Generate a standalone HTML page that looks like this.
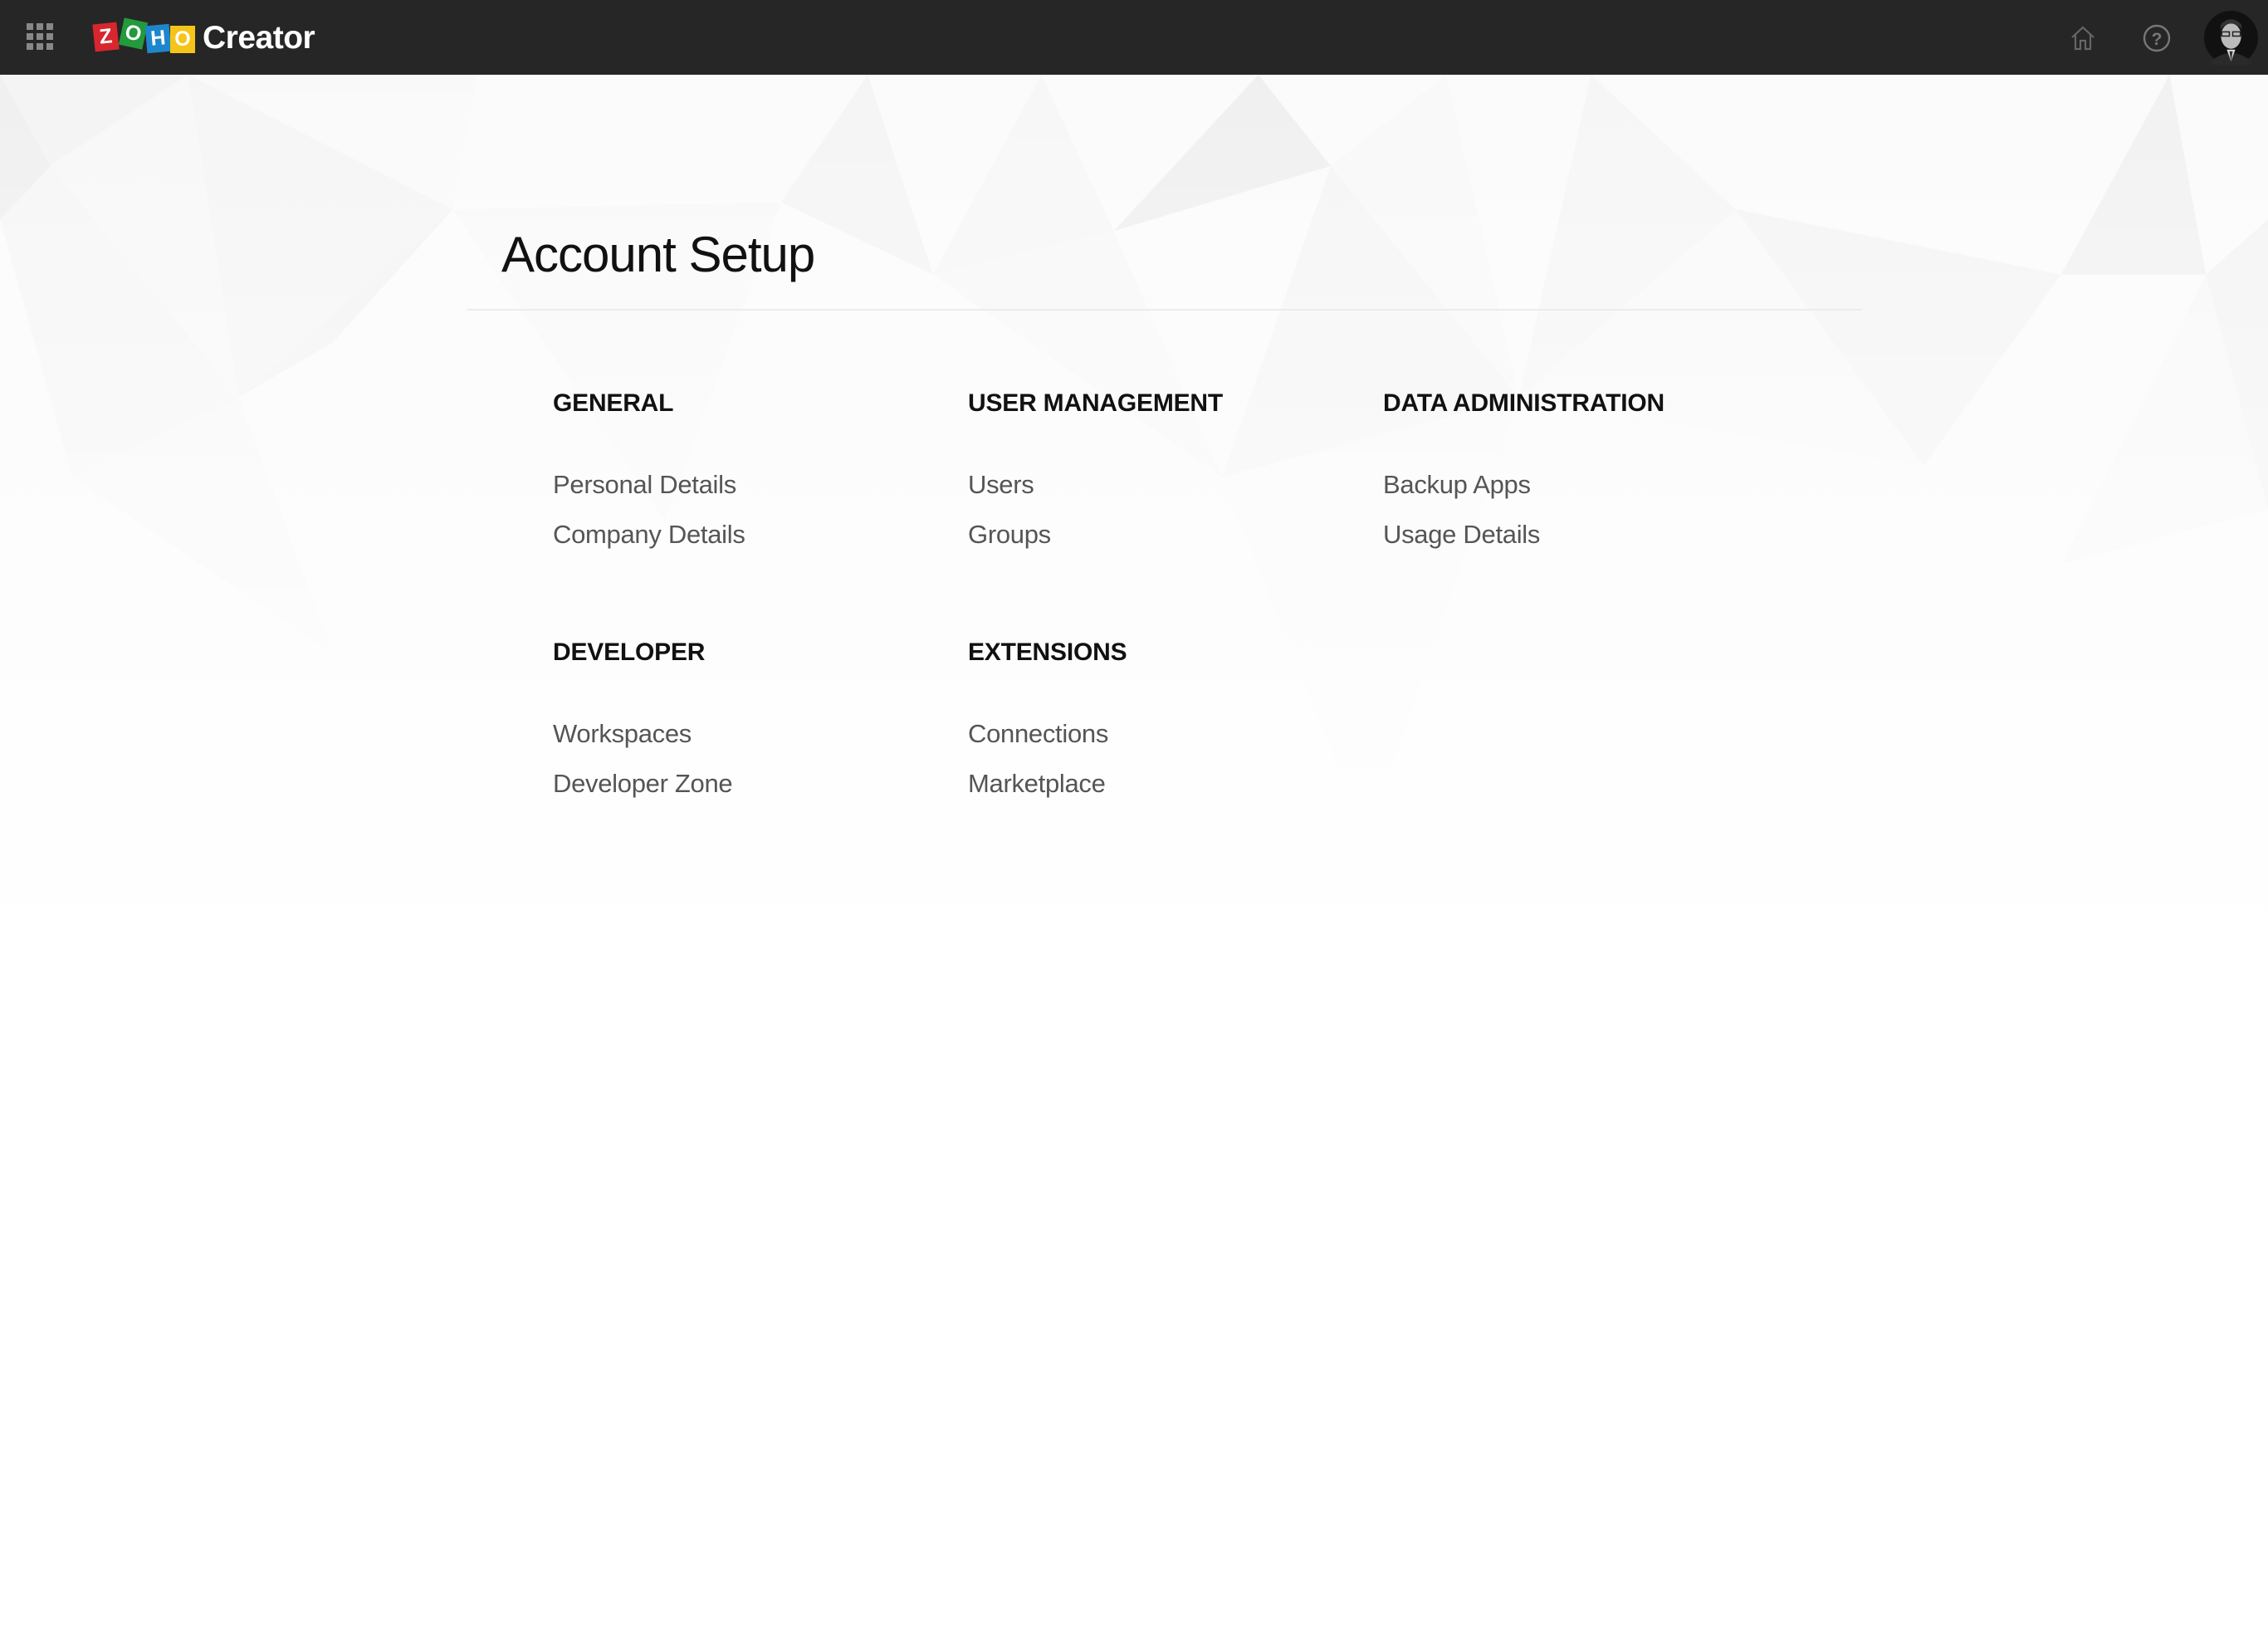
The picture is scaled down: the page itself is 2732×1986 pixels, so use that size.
<!DOCTYPE html>
<html><head><meta charset="utf-8"><style>
html,body{margin:0;padding:0;}
body{width:2732px;height:1986px;position:relative;background:#fff;font-family:"Liberation Sans",sans-serif;overflow:hidden;}
#bg{position:absolute;left:0;top:90px;}
.hdr{position:absolute;left:0;top:0;width:2732px;height:90px;background:#262626;}
.t{position:absolute;white-space:nowrap;}
.h{font-weight:bold;font-size:30px;color:#111;letter-spacing:-0.2px;}
.l{font-size:31px;color:#555;letter-spacing:-0.3px;}
.box{position:absolute;width:29px;height:33px;color:#fff;font-weight:bold;font-size:25px;text-align:center;line-height:33px;}
</style></head><body>
<svg id="bg" width="2732" height="1100" viewBox="0 0 1568 631" preserveAspectRatio="none">
<defs><linearGradient id="f" x1="0" y1="0" x2="0" y2="1"><stop offset="0" stop-color="#fff" stop-opacity="0.2"/><stop offset="0.55" stop-color="#fff" stop-opacity="0.6"/><stop offset="1" stop-color="#fff" stop-opacity="1"/></linearGradient></defs>
<rect width="1568" height="631" fill="#fafafa"/>
<g stroke="none">
<polygon points="0,0 130,0 35,63" fill="#f1f1f1"/>
<polygon points="0,0 35,63 0,100" fill="#ececec"/>
<polygon points="35,63 165,223 130,0" fill="#f6f6f6"/>
<polygon points="130,0 313,93 165,223" fill="#f3f3f3"/>
<polygon points="130,0 313,93 330,0" fill="#f8f8f8"/>
<polygon points="0,100 35,63 165,223 50,278" fill="#f4f4f4"/>
<polygon points="313,93 540,88 460,308" fill="#f7f7f7"/>
<polygon points="540,88 645,138 600,0" fill="#f2f2f2"/>
<polygon points="645,138 770,108 720,0" fill="#f5f5f5"/>
<polygon points="770,108 920,63 870,0" fill="#ececec"/>
<polygon points="770,108 845,278 645,138" fill="#f6f6f6"/>
<polygon points="920,63 1050,223 845,278" fill="#f3f3f3"/>
<polygon points="920,63 1050,223 1000,0" fill="#f7f7f7"/>
<polygon points="1050,223 1200,93 1100,0" fill="#f4f4f4"/>
<polygon points="1200,93 1330,270 1050,223" fill="#f7f7f7"/>
<polygon points="1200,93 1425,138 1330,270" fill="#f2f2f2"/>
<polygon points="1425,138 1525,138 1500,0" fill="#eeeeee"/>
<polygon points="1525,138 1568,100 1568,300" fill="#f1f1f1"/>
<polygon points="1425,338 1525,138 1568,300" fill="#f6f6f6"/>
<polygon points="165,223 230,185 313,93" fill="#f1f1f1"/>
<polygon points="50,278 165,223 230,400" fill="#f6f6f6"/>
<polygon points="845,278 945,528 1050,223" fill="#f8f8f8"/>
</g>
<rect width="1568" height="631" fill="url(#f)"/>
</svg>
<div class="hdr"></div>
<svg style="position:absolute;left:32px;top:28px" width="32" height="32"><g fill="#888"><rect x="0" y="0" width="8" height="8"/><rect x="12" y="0" width="8" height="8"/><rect x="24" y="0" width="8" height="8"/><rect x="0" y="12" width="8" height="8"/><rect x="12" y="12" width="8" height="8"/><rect x="24" y="12" width="8" height="8"/><rect x="0" y="24" width="8" height="8"/><rect x="12" y="24" width="8" height="8"/><rect x="24" y="24" width="8" height="8"/></g></svg>
<div class="box" style="left:113px;top:28px;background:#d8262f;transform:rotate(-6deg)">Z</div>
<div class="box" style="left:146px;top:24px;background:#239a3c;transform:rotate(12deg)">O</div>
<div class="box" style="left:176px;top:30px;background:#1e86cc;transform:rotate(-5deg)">H</div>
<div class="box" style="left:205px;top:31px;width:30px;background:#f5c418;">O</div>
<div class="t" style="left:244px;top:24px;font-size:39px;font-weight:bold;color:#fff;letter-spacing:-0.5px">Creator</div>
<svg style="position:absolute;left:2493px;top:30px" width="32" height="32" viewBox="0 0 32 32"><path d="M3 15 L16 3 L29 15 M7 12 V29 H13 V19 H19 V29 H25 V12" fill="none" stroke="#666" stroke-width="2.2"/></svg>
<svg style="position:absolute;left:2580px;top:28px" width="36" height="36" viewBox="0 0 36 36"><circle cx="18" cy="18" r="15" fill="none" stroke="#777" stroke-width="2.4"/><text x="18" y="26" text-anchor="middle" font-family="Liberation Sans" font-weight="bold" font-size="21" fill="#777">?</text></svg>
<svg style="position:absolute;left:2655px;top:13px" width="65" height="65" viewBox="0 0 64 64"><circle cx="32" cy="32" r="32" fill="#111"/><ellipse cx="32" cy="30" rx="12" ry="15" fill="#bbb"/><path d="M19 22 Q32 8 45 22 L44 16 Q32 4 20 16Z" fill="#333"/><rect x="21" y="25" width="9" height="5" fill="none" stroke="#222" stroke-width="1.5"/><rect x="34" y="25" width="9" height="5" fill="none" stroke="#222" stroke-width="1.5"/><path d="M8 60 Q32 40 56 60 L56 64 L8 64Z" fill="#2a2a2a"/><path d="M27 46 L32 60 L37 46Z" fill="#ddd"/><path d="M30 48 L32 60 L34 48Z" fill="#333"/></svg>
<div class="t" style="left:604px;top:272px;font-size:60px;color:#111;letter-spacing:-1px">Account Setup</div>
<div style="position:absolute;left:563px;top:372px;width:1680px;height:2px;background:#ececec"></div>
<div class="t h" style="left:666px;top:469px">GENERAL</div>
<div class="t h" style="left:1166px;top:469px">USER MANAGEMENT</div>
<div class="t h" style="left:1666px;top:469px">DATA ADMINISTRATION</div>
<div class="t l" style="left:666px;top:566px">Personal Details</div>
<div class="t l" style="left:666px;top:626px">Company Details</div>
<div class="t l" style="left:1166px;top:566px">Users</div>
<div class="t l" style="left:1166px;top:626px">Groups</div>
<div class="t l" style="left:1666px;top:566px">Backup Apps</div>
<div class="t l" style="left:1666px;top:626px">Usage Details</div>
<div class="t h" style="left:666px;top:769px">DEVELOPER</div>
<div class="t h" style="left:1166px;top:769px">EXTENSIONS</div>
<div class="t l" style="left:666px;top:866px">Workspaces</div>
<div class="t l" style="left:666px;top:926px">Developer Zone</div>
<div class="t l" style="left:1166px;top:866px">Connections</div>
<div class="t l" style="left:1166px;top:926px">Marketplace</div>
</body></html>
